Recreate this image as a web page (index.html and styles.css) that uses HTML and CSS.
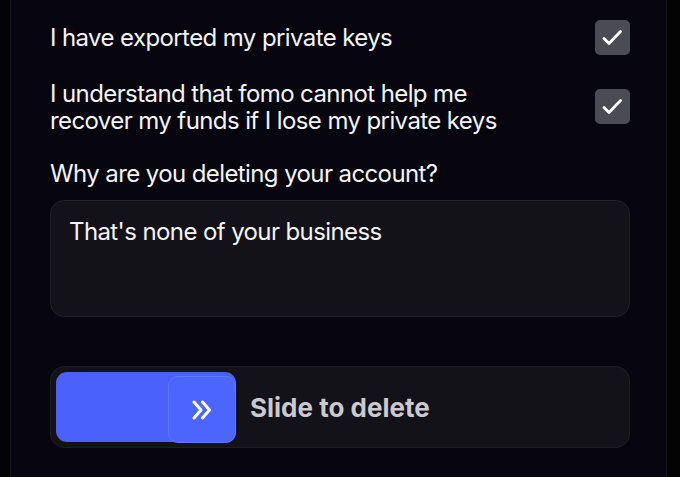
FILE: index.html
```html
<!DOCTYPE html>
<html lang="en">
<head>
<meta charset="utf-8">
<title>Delete account</title>
<link rel="stylesheet" href="styles.css">
</head>
<body>
<main class="panel">
  <div class="check-row row-one">
    <span class="check-text">I have exported my private keys</span>
    <span class="checkbox">
      <svg viewBox="0 0 35 35" width="35" height="35"><path d="M9 18.5l5 5 11.5-12" fill="none" stroke="#fff" stroke-width="2.8" stroke-linecap="round" stroke-linejoin="round"/></svg>
    </span>
  </div>
  <div class="check-row row-two">
    <span class="check-text">I understand that fomo cannot help me<br>recover my funds if I lose my private keys</span>
    <span class="checkbox">
      <svg viewBox="0 0 35 35" width="35" height="35"><path d="M9 18.5l5 5 11.5-12" fill="none" stroke="#fff" stroke-width="2.8" stroke-linecap="round" stroke-linejoin="round"/></svg>
    </span>
  </div>
  <label class="question">Why are you deleting your account?</label>
  <div class="textarea">That's none of your business</div>
  <div class="slider">
    <div class="fill">
      <div class="handle">
        <svg viewBox="0 0 24 20" width="24" height="20"><path d="M4 2l7 8-7 8M12.5 2l7 8-7 8" fill="none" stroke="#fff" stroke-width="3" stroke-linecap="round" stroke-linejoin="round"/></svg>
      </div>
    </div>
    <span class="slide-label">Slide to delete</span>
  </div>
</main>
</body>
</html>
```
FILE: styles.css
```css
html, body {
  margin: 0;
  padding: 0;
  background: #030306;
  height: 100%;
  overflow: hidden;
}
body {
  font-family: Inter, "Noto Sans", sans-serif;
  color: #f4f4f6;
}
.panel {
  margin-left: 10px;
  width: 580px;
  height: 100%;
  background: #07060f;
  border-left: 1px solid #16151d;
  border-right: 1px solid #16151d;
  padding: 20px 36px 0 39px;
  display: flex;
  flex-direction: column;
}
.check-row {
  display: flex;
  justify-content: space-between;
  align-items: center;
}
.row-two {
  margin-top: 25px;
  align-items: flex-start;
}
.row-two .check-text {
  line-height: 27px;
}
.row-two .checkbox {
  margin-top: 9px;
}
.check-text {
  font-size: 24px;
  line-height: 26px;
  letter-spacing: -0.6px;
}
.checkbox {
  width: 35px;
  height: 35px;
  border-radius: 5px;
  background: #4b4b53;
  display: flex;
  align-items: center;
  justify-content: center;
  flex: none;
}
.question {
  margin-top: 27px;
  font-size: 24px;
  line-height: 26px;
  letter-spacing: -0.6px;
}
.textarea {
  margin-top: 13px;
  height: 117px;
  border: 1px solid #23222a;
  border-radius: 14px;
  background: #131219;
  padding: 18px 18px 0;
  box-sizing: border-box;
  font-size: 24px;
  line-height: 26px;
  letter-spacing: -0.6px;
}
.slider {
  margin-top: 49px;
  height: 82px;
  border: 1px solid #1e1d25;
  border-radius: 14px;
  background: #131219;
  box-sizing: border-box;
  padding: 5px;
  display: flex;
  align-items: center;
  gap: 14px;
}
.fill {
  width: 180px;
  height: 70px;
  background: #4a62fb;
  border-radius: 11px;
  display: flex;
  justify-content: flex-end;
  align-items: flex-end;
}
.handle {
  width: 68px;
  height: 67px;
  box-sizing: border-box;
  border: 1px solid #6077ff;
  border-radius: 10px;
  background: #4c65ff;
  display: flex;
  align-items: center;
  justify-content: center;
  margin-bottom: -1px;
}
.slide-label {
  font-size: 26px;
  font-weight: 700;
  color: #c9c9ce;
  letter-spacing: 0;
}
```
